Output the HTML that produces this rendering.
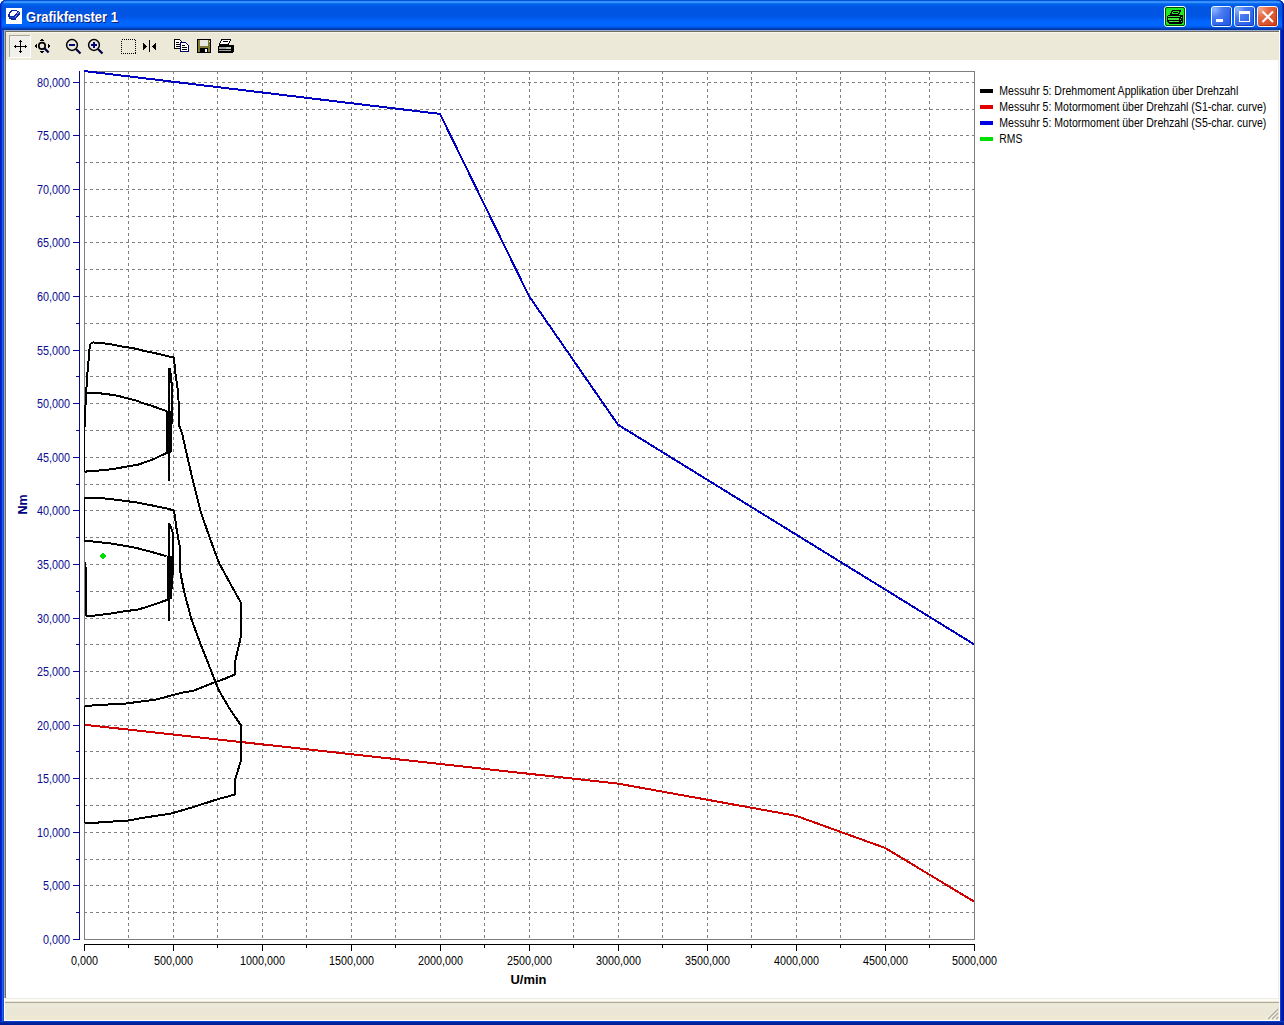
<!DOCTYPE html>
<html><head><meta charset="utf-8">
<style>
*{margin:0;padding:0;box-sizing:border-box}
html,body{width:1284px;height:1025px;overflow:hidden;background:#FFFFFF;font-family:"Liberation Sans",sans-serif;position:relative}
.a{position:absolute}
#title{left:0;top:0;width:1284px;height:30px;border-radius:6px 6px 0 0;box-shadow:inset 1px 0 0 #0020C8,inset 2px 0 0 #0840D8,inset -1px 0 0 #001A98,inset -2px 0 0 #0030C0;
background:linear-gradient(to bottom,#0058D8 0px,#0058D8 1px,#2A85FA 1px,#3A93FF 2px,#3A93FF 3px,#1479F5 3px,#0066EA 4px,#005FEE 5px,#0059E6 6px,#0055E2 7px,#0055E2 16px,#005AEC 18px,#0060F5 20px,#0066FF 21px,#0066FF 26px,#005AEE 27px,#0048C8 28px,#0038A8 29px,#0038A8 30px)}
#frame{left:0;top:30px;width:1284px;height:995px;
background:linear-gradient(to right,#0018D0 0,#0018D0 1px,#0828D8 1px,#0828D8 2px,#2060F0 2px,#2060F0 3px,#1050C0 3px,#1050C0 4px,#0B3FE0 4px,#0B3FE0 1281px,#0020B8 1281px,#0018A0 1283px,#001090 1284px)}
#fbot{left:0;top:1021px;width:1284px;height:4px;background:linear-gradient(to bottom,#0A3CC8 0,#0A3CC8 1px,#0028A8 1px,#001A90 4px)}
#client{left:4px;top:30px;width:1276px;height:991px;background:#ECE9D8}
#ttl{left:26px;top:8px;font:bold 13.6px "Liberation Sans",sans-serif;color:#fff;text-shadow:1px 1px 0 #0A1E80;white-space:nowrap;letter-spacing:-0.15px}
svg text{font-family:"Liberation Sans",sans-serif;font-size:12px}
</style></head><body>
<div class="a" id="title"></div>
<div class="a" id="frame"></div>
<div class="a" id="fbot"></div>
<div class="a" id="client">
  <div class="a" style="left:0;top:0;width:1276px;height:1px;background:#98ACD0"></div>
  <div class="a" style="left:0;top:0;width:1px;height:968px;background:#98ACD0"></div>
  <div class="a" style="left:1px;top:1px;width:1274px;height:1px;background:#716F64"></div>
  <div class="a" style="left:1px;top:1px;width:1px;height:967px;background:#716F64"></div>
  <div class="a" style="left:2px;top:2px;width:1273px;height:1px;background:#F8F6EA"></div>
  <div class="a" style="left:1275px;top:0;width:1px;height:991px;background:#fff"></div>
  <div class="a" style="left:0;top:990px;width:1276px;height:1px;background:#fff"></div>
  <div class="a" style="left:1px;top:1px;width:1px;height:967px;background:#716F64"></div>
  <!-- chart white -->
  <div class="a" style="left:2px;top:30px;width:1273px;height:938px;background:#fff"></div>
  <div class="a" style="left:2px;top:968px;width:1273px;height:1px;background:#F0EEE4"></div>
  <div class="a" style="left:1274px;top:30px;width:1px;height:939px;background:#F0EEE4"></div>
  <div class="a" style="left:1px;top:969px;width:1274px;height:2px;background:#FBFAF4"></div>
  <div class="a" style="left:0;top:968px;width:1px;height:23px;background:#FFFFFF"></div>
  <div class="a" style="left:1px;top:972px;width:1274px;height:1px;background:#ACA899"></div>
  <div class="a" style="left:1px;top:973px;width:1274px;height:17px;background:linear-gradient(to bottom,#ECE9D8,#EAE7D8 60%,#F0E8D2 90%,#ECE9D8)"></div>
</div>
<svg width="1284" height="1025" style="position:absolute;left:0;top:0">
<g shape-rendering="crispEdges">
<path d="M128.5 71V939 M173.5 71V939 M217.5 71V939 M262.5 71V939 M306.5 71V939 M351.5 71V939 M395.5 71V939 M440.5 71V939 M484.5 71V939 M529.5 71V939 M573.5 71V939 M618.5 71V939 M662.5 71V939 M707.5 71V939 M751.5 71V939 M796.5 71V939 M840.5 71V939 M885.5 71V939 M929.5 71V939 M84 912.5H974 M84 885.5H974 M84 859.5H974 M84 832.5H974 M84 805.5H974 M84 778.5H974 M84 751.5H974 M84 725.5H974 M84 698.5H974 M84 671.5H974 M84 644.5H974 M84 618.5H974 M84 591.5H974 M84 564.5H974 M84 537.5H974 M84 510.5H974 M84 484.5H974 M84 457.5H974 M84 430.5H974 M84 403.5H974 M84 376.5H974 M84 350.5H974 M84 323.5H974 M84 296.5H974 M84 269.5H974 M84 242.5H974 M84 216.5H974 M84 189.5H974 M84 162.5H974 M84 135.5H974 M84 109.5H974 M84 82.5H974" stroke="#808080" stroke-width="1" stroke-dasharray="3 3" fill="none"/>
<rect x="84.5" y="71.5" width="890" height="868" fill="none" stroke="#808080" stroke-width="1"/>
<path d="M79.5 71V940 M73 939.5H80 M76 912.5H80 M73 885.5H80 M76 859.5H80 M73 832.5H80 M76 805.5H80 M73 778.5H80 M76 751.5H80 M73 725.5H80 M76 698.5H80 M73 671.5H80 M76 644.5H80 M73 618.5H80 M76 591.5H80 M73 564.5H80 M76 537.5H80 M73 510.5H80 M76 484.5H80 M73 457.5H80 M76 430.5H80 M73 403.5H80 M76 376.5H80 M73 350.5H80 M76 323.5H80 M73 296.5H80 M76 269.5H80 M73 242.5H80 M76 216.5H80 M73 189.5H80 M76 162.5H80 M73 135.5H80 M76 109.5H80 M73 82.5H80" stroke="#0A0A90" stroke-width="1" fill="none"/>
<path d="M84 944.5H975 M84.5 944V951 M128.5 944V948 M173.5 944V951 M217.5 944V948 M262.5 944V951 M306.5 944V948 M351.5 944V951 M395.5 944V948 M440.5 944V951 M484.5 944V948 M529.5 944V951 M573.5 944V948 M618.5 944V951 M662.5 944V948 M707.5 944V951 M751.5 944V948 M796.5 944V951 M840.5 944V948 M885.5 944V951 M929.5 944V948 M974.5 944V951" stroke="#000" stroke-width="1" fill="none"/>
<path d="M84.0 71.0 L440.0 113.9 L529.0 296.1 L618.0 424.7 L974.0 644.3" stroke="#0000C0" stroke-width="2" fill="none" stroke-linejoin="round"/>
<path d="M84.0 724.7 L618.0 783.6 L796.0 815.8 L885.0 847.9 L974.0 901.5" stroke="#D00000" stroke-width="2" fill="none" stroke-linejoin="round"/>
<path d="M85.2 427.0 L85.5 405.0 L86.2 392.2 L86.8 381.7 L87.7 369.7 L88.8 357.7 L89.7 346.5 L90.6 343.6 L93.2 342.4 L109.6 343.9 L116.6 345.4 L123.7 346.8 L130.7 347.7 L136.0 348.8 L143.6 350.8 L152.4 352.6 L161.2 354.6 L168.8 356.4 L174.1 357.6 L174.9 369.3 L176.1 378.0 L177.0 384.5 L178.2 392.7 L178.5 400.0 L178.9 424.6 L182.2 434.0 L187.4 457.1 L193.9 484.9 L200.4 510.8 L209.7 537.7 L218.9 562.7 L230.0 583.1 L240.5 602.0 L240.5 638.3 L235.4 660.2 L234.9 674.5 L225.1 678.6 L215.5 682.0 L193.4 690.7 L181.8 692.7 L155.9 699.6 L124.4 703.7 L98.5 705.0 L84.8 706.1" stroke="#000" stroke-width="2" fill="none" stroke-linejoin="round"/>
<path d="M85.5 392.6 L98.2 393.1 L108.8 394.4 L117.5 395.7 L127.2 398.3 L138.0 401.0 L140.0 402.2 L151.4 405.7 L166.4 411.0" stroke="#000" stroke-width="2" fill="none" stroke-linejoin="round"/>
<path d="M84.6 472.2 L88.5 470.8 L102.6 470.4 L114.9 468.7 L127.2 466.5 L138.0 464.7 L153.2 459.3 L166.4 453.1 L170.8 451.4" stroke="#000" stroke-width="2" fill="none" stroke-linejoin="round"/>
<path d="M168.6 368.0 L168.6 481.0" stroke="#000" stroke-width="2" fill="none" stroke-linejoin="round"/>
<path d="M169.5 368.0 L171.1 376.3 L171.6 383.9 L171.6 400.0 L171.6 422.0 L170.5 452.0" stroke="#000" stroke-width="2" fill="none" stroke-linejoin="round"/>
<path d="M84.3 498.2 L102.1 498.2 L113.5 499.5 L128.8 501.4 L138.0 502.7 L152.5 505.5 L167.7 508.7 L174.1 510.6 L176.6 529.0 L179.8 546.8 L179.8 569.6 L184.2 592.1 L186.3 600.0 L191.7 620.1 L193.9 626.0 L200.5 643.8 L215.5 682.0 L218.7 690.0 L229.2 708.0 L240.6 724.8 L241.0 760.4 L235.1 779.5 L235.1 794.5 L217.3 799.3 L194.1 806.8 L170.9 813.6 L143.6 817.7 L128.5 820.5 L98.5 822.5 L84.8 822.5" stroke="#000" stroke-width="2" fill="none" stroke-linejoin="round"/>
<path d="M84.3 540.8 L92.0 541.4 L109.7 543.3 L128.8 546.5 L138.0 548.4 L151.2 551.8 L166.5 556.3" stroke="#000" stroke-width="2" fill="none" stroke-linejoin="round"/>
<path d="M85.5 562.0 L85.6 591.5 L86.2 615.6" stroke="#000" stroke-width="2" fill="none" stroke-linejoin="round"/>
<path d="M86.2 615.6 L94.5 615.6 L109.7 613.7 L128.8 610.6 L136.0 610.2 L152.5 605.1 L166.5 600.1 L170.9 597.5" stroke="#000" stroke-width="2" fill="none" stroke-linejoin="round"/>
<path d="M169.3 522.6 L169.3 621.0" stroke="#000" stroke-width="2" fill="none" stroke-linejoin="round"/>
<path d="M169.6 523.9 L172.8 532.8 L172.8 570.9 L170.9 597.5" stroke="#000" stroke-width="2" fill="none" stroke-linejoin="round"/>
<path d="M166 411H171.5V452H166Z M166.5 556H172V599H166.5Z" fill="#000"/>
<path d="M84 427H85V472H84Z M84 498H85V541H84Z M84 706H85V823H84Z" fill="#000"/>
<path d="M102.5 552.5L106 556L102.5 559.5L99 556Z" fill="#00E000"/>
</g>
<g fill="#0A0A90">
<text x="70" y="944" text-anchor="end" textLength="27" lengthAdjust="spacingAndGlyphs">0,000</text>
<text x="70" y="890" text-anchor="end" textLength="27" lengthAdjust="spacingAndGlyphs">5,000</text>
<text x="70" y="837" text-anchor="end" textLength="33" lengthAdjust="spacingAndGlyphs">10,000</text>
<text x="70" y="783" text-anchor="end" textLength="33" lengthAdjust="spacingAndGlyphs">15,000</text>
<text x="70" y="730" text-anchor="end" textLength="33" lengthAdjust="spacingAndGlyphs">20,000</text>
<text x="70" y="676" text-anchor="end" textLength="33" lengthAdjust="spacingAndGlyphs">25,000</text>
<text x="70" y="623" text-anchor="end" textLength="33" lengthAdjust="spacingAndGlyphs">30,000</text>
<text x="70" y="569" text-anchor="end" textLength="33" lengthAdjust="spacingAndGlyphs">35,000</text>
<text x="70" y="515" text-anchor="end" textLength="33" lengthAdjust="spacingAndGlyphs">40,000</text>
<text x="70" y="462" text-anchor="end" textLength="33" lengthAdjust="spacingAndGlyphs">45,000</text>
<text x="70" y="408" text-anchor="end" textLength="33" lengthAdjust="spacingAndGlyphs">50,000</text>
<text x="70" y="355" text-anchor="end" textLength="33" lengthAdjust="spacingAndGlyphs">55,000</text>
<text x="70" y="301" text-anchor="end" textLength="33" lengthAdjust="spacingAndGlyphs">60,000</text>
<text x="70" y="247" text-anchor="end" textLength="33" lengthAdjust="spacingAndGlyphs">65,000</text>
<text x="70" y="194" text-anchor="end" textLength="33" lengthAdjust="spacingAndGlyphs">70,000</text>
<text x="70" y="140" text-anchor="end" textLength="33" lengthAdjust="spacingAndGlyphs">75,000</text>
<text x="70" y="87" text-anchor="end" textLength="33" lengthAdjust="spacingAndGlyphs">80,000</text>
</g>
<g fill="#000">
<text x="84.5" y="965" text-anchor="middle" textLength="27" lengthAdjust="spacingAndGlyphs">0,000</text>
<text x="173.5" y="965" text-anchor="middle" textLength="39" lengthAdjust="spacingAndGlyphs">500,000</text>
<text x="262.5" y="965" text-anchor="middle" textLength="45" lengthAdjust="spacingAndGlyphs">1000,000</text>
<text x="351.5" y="965" text-anchor="middle" textLength="45" lengthAdjust="spacingAndGlyphs">1500,000</text>
<text x="440.5" y="965" text-anchor="middle" textLength="45" lengthAdjust="spacingAndGlyphs">2000,000</text>
<text x="529.5" y="965" text-anchor="middle" textLength="45" lengthAdjust="spacingAndGlyphs">2500,000</text>
<text x="618.5" y="965" text-anchor="middle" textLength="45" lengthAdjust="spacingAndGlyphs">3000,000</text>
<text x="707.5" y="965" text-anchor="middle" textLength="45" lengthAdjust="spacingAndGlyphs">3500,000</text>
<text x="796.5" y="965" text-anchor="middle" textLength="45" lengthAdjust="spacingAndGlyphs">4000,000</text>
<text x="885.5" y="965" text-anchor="middle" textLength="45" lengthAdjust="spacingAndGlyphs">4500,000</text>
<text x="974.5" y="965" text-anchor="middle" textLength="45" lengthAdjust="spacingAndGlyphs">5000,000</text>
<text x="510.5" y="984" font-weight="bold" style="font-size:13px" textLength="36" lengthAdjust="spacingAndGlyphs">U/min</text>
</g>
<text transform="translate(27 504.5) rotate(-90)" text-anchor="middle" fill="#000080" font-weight="bold" style="font-size:12.5px">Nm</text>
<g fill="#000">
<rect x="980" y="89" width="13" height="4" fill="#000"/><text x="999.3" y="95" textLength="239" lengthAdjust="spacingAndGlyphs">Messuhr 5: Drehmoment Applikation über Drehzahl</text>
<rect x="980" y="105" width="13" height="4" fill="#E00000"/><text x="999.3" y="111" textLength="267" lengthAdjust="spacingAndGlyphs">Messuhr 5: Motormoment über Drehzahl (S1-char. curve)</text>
<rect x="980" y="121" width="13" height="4" fill="#0000E0"/><text x="999.3" y="127" textLength="267" lengthAdjust="spacingAndGlyphs">Messuhr 5: Motormoment über Drehzahl (S5-char. curve)</text>
<rect x="980" y="137" width="13" height="4" fill="#00E000"/><text x="999.3" y="143" textLength="23" lengthAdjust="spacingAndGlyphs">RMS</text>
</g>

<g shape-rendering="crispEdges">
 <rect x="9" y="35" width="22" height="23" fill="#F1F0EC"/>
 <rect x="9" y="35" width="21" height="1" fill="#ACA899"/>
 <rect x="9" y="35" width="1" height="22" fill="#ACA899"/>
 <rect x="30" y="35" width="1" height="23" fill="#FFFFFF"/>
 <rect x="9" y="57" width="22" height="1" fill="#FFFFFF"/>
 <!-- move -->
 <rect x="20" y="40" width="1" height="13" fill="#000"/>
 <rect x="14" y="46" width="13" height="1" fill="#000"/>
 <rect x="19" y="41" width="3" height="1" fill="#000"/>
 <rect x="19" y="51" width="3" height="1" fill="#000"/>
 <rect x="15" y="45" width="1" height="3" fill="#000"/>
 <rect x="25" y="45" width="1" height="3" fill="#000"/>
</g>
<!-- zoom fit -->
<g shape-rendering="crispEdges" fill="#000">
 <rect x="41" y="39" width="2" height="1"/><rect x="40" y="40" width="4" height="1"/>
 <rect x="40" y="51" width="4" height="1"/><rect x="41" y="52" width="2" height="1"/>
 <rect x="35" y="45" width="1" height="2"/><rect x="36" y="44" width="1" height="4"/>
 <rect x="48" y="44" width="1" height="4"/><rect x="49" y="45" width="1" height="2"/>
</g>
<circle cx="42" cy="45.9" r="3.2" fill="none" stroke="#000" stroke-width="1.7"/><path d="M44.6 48.5L48.6 52.5" stroke="#000040" stroke-width="2.3"/>
<!-- zoom out -->
<circle cx="72" cy="45" r="5.4" fill="none" stroke="#000" stroke-width="1.5"/>
<rect x="69" y="44" width="6" height="2" fill="#000080"/>
<path d="M76 49L80.5 53.5" stroke="#000040" stroke-width="2.2"/>
<!-- zoom in -->
<circle cx="94" cy="45" r="5.4" fill="none" stroke="#000" stroke-width="1.5"/>
<rect x="91" y="44" width="6" height="2" fill="#000080"/>
<rect x="93" y="42" width="2" height="6" fill="#000080"/>
<path d="M98 49L102.5 53.5" stroke="#000040" stroke-width="2.2"/>
<!-- dotted rect -->
<rect x="121.5" y="39.5" width="14" height="14" fill="none" stroke="#000" stroke-width="1" stroke-dasharray="1 1" shape-rendering="crispEdges"/>
<!-- mirror -->
<g shape-rendering="crispEdges">
<rect x="149" y="40" width="1" height="12" fill="#000"/>
<path d="M143 43L147 46.5L143 50Z" fill="#000"/>
<path d="M156 43L152 46.5L156 50Z" fill="#000"/>
<!-- copy -->
<path d="M174.5 39.5H179.5L181.5 41.5V48.5H174.5Z" fill="#fff" stroke="#000"/>
<rect x="176" y="42" width="3" height="1" fill="#000"/><rect x="176" y="44" width="4" height="1" fill="#000"/><rect x="176" y="46" width="4" height="1" fill="#000"/>
<path d="M180.5 42.5H185.5L188.5 45.5V51.5H180.5Z" fill="#fff" stroke="#000060"/>
<rect x="182" y="45" width="3" height="1" fill="#000"/><rect x="182" y="47" width="5" height="1" fill="#000"/><rect x="182" y="49" width="5" height="1" fill="#000"/>
<!-- floppy -->
<rect x="197" y="39" width="14" height="14" fill="#000"/>
<rect x="198" y="40" width="12" height="12" fill="#7E7A30"/>
<rect x="200" y="40" width="8" height="6" fill="#E8E8E0"/>
<rect x="200" y="48" width="8" height="5" fill="#000"/>
<rect x="205" y="49" width="2" height="3" fill="#fff"/>
<rect x="209" y="41" width="1" height="1" fill="#fff"/>
<!-- printer -->
<path d="M221.5 39.5H230.5L228.5 44.5H219.5Z" fill="#fff" stroke="#000"/>
<rect x="223" y="41" width="5" height="1" fill="#000"/>
<rect x="218" y="45" width="16" height="8" rx="2" fill="#000"/>
<rect x="219" y="47" width="12" height="2" fill="#A0A0A0"/>
<rect x="226" y="47" width="5" height="2" fill="#B0D0B0"/>
<rect x="219" y="50" width="12" height="1" fill="#A0A0A0"/>
</g>


<!-- app icon -->
<g shape-rendering="crispEdges">
<rect x="6" y="8" width="16" height="16" fill="#fff"/>
<g fill="#1028A8"><rect x="11" y="10" width="6" height="1"/><rect x="10" y="11" width="2" height="1"/><rect x="17" y="11" width="2" height="1"/><rect x="9" y="12" width="2" height="1"/><rect x="17" y="12" width="3" height="1"/><rect x="9" y="13" width="1" height="1"/><rect x="16" y="13" width="4" height="1"/><rect x="8" y="14" width="2" height="1"/><rect x="15" y="14" width="5" height="1"/><rect x="8" y="15" width="2" height="1"/><rect x="14" y="15" width="5" height="1"/><rect x="8" y="16" width="10" height="1"/><rect x="9" y="17" width="8" height="1"/><rect x="9" y="18" width="7" height="1"/><rect x="11" y="19" width="5" height="1"/></g>
<rect x="10" y="17" width="6" height="1" fill="#2040D0"/>
<rect x="18" y="12" width="1" height="1" fill="#A0C0FF"/><rect x="17" y="13" width="1" height="1" fill="#A0C0FF"/><rect x="16" y="15" width="1" height="1" fill="#80A0F0"/><rect x="15" y="16" width="1" height="1" fill="#80A0F0"/>
</g>
<!-- green printer button -->
<rect x="1164.5" y="6.5" width="21" height="20" rx="2.5" fill="#10D010" stroke="#F0FFF8"/>
<rect x="1165.5" y="7.5" width="19" height="18" rx="1.5" fill="#22E822" stroke="#005000"/>
<g shape-rendering="crispEdges">
<path d="M1172.5 10.5H1180.5L1178.5 14.5H1170.5Z" fill="none" stroke="#000"/>
<rect x="1173" y="12" width="5" height="1" fill="#000"/>
<path d="M1168 15H1183V22L1182 24H1169L1167 22V17Z" fill="#000"/>
<rect x="1168" y="16" width="12" height="1" fill="#40E840"/>
<rect x="1168" y="18" width="11" height="2" fill="#40E840"/>
<rect x="1169" y="21" width="10" height="1" fill="#40E840"/>
<rect x="1181" y="17" width="1" height="1" fill="#40E840"/>
<rect x="1180" y="19" width="1" height="1" fill="#40E840"/>
<rect x="1181" y="21" width="1" height="1" fill="#40E840"/>
</g>
<!-- min -->
<defs>
<radialGradient id="gb" cx="0.15" cy="0.15" r="1.1"><stop offset="0" stop-color="#8CB4FF"/><stop offset="0.35" stop-color="#4A7CF0"/><stop offset="0.75" stop-color="#2E64EA"/><stop offset="1" stop-color="#1A58F0"/></radialGradient>
<radialGradient id="gr" cx="0.15" cy="0.15" r="1.1"><stop offset="0" stop-color="#F4A488"/><stop offset="0.35" stop-color="#E46A48"/><stop offset="0.75" stop-color="#D8502C"/><stop offset="1" stop-color="#CC3A10"/></radialGradient>
</defs>
<rect x="1211.5" y="6.5" width="20" height="20" rx="2.5" fill="url(#gb)" stroke="#EAFAFF"/>
<path d="M1230.5 8.5V24.5Q1230.5 25.5 1229.5 25.5H1213.5" stroke="#1038B0" fill="none" stroke-width="1" opacity="0.8"/>
<rect x="1216" y="19" width="7" height="3" fill="#fff"/>
<rect x="1234.5" y="6.5" width="20" height="20" rx="2.5" fill="url(#gb)" stroke="#EAFAFF"/>
<path d="M1253.5 8.5V24.5Q1253.5 25.5 1252.5 25.5H1236.5" stroke="#1038B0" fill="none" stroke-width="1" opacity="0.8"/>
<g shape-rendering="crispEdges"><rect x="1239" y="11" width="11" height="3" fill="#fff"/><rect x="1239" y="11" width="1" height="11" fill="#fff"/><rect x="1249" y="11" width="1" height="11" fill="#fff"/><rect x="1239" y="21" width="11" height="1" fill="#fff"/></g>
<rect x="1257.5" y="6.5" width="20" height="20" rx="2.5" fill="url(#gr)" stroke="#FFF4F0"/>
<path d="M1276.5 8.5V24.5Q1276.5 25.5 1275.5 25.5H1259.5" stroke="#B02800" fill="none" stroke-width="1" opacity="0.7"/>
<path d="M1262.5 11.5L1273 22M1273 11.5L1262.5 22" stroke="#fff" stroke-width="2"/>

<text x="27" y="23" fill="#0A1E80" font-weight="bold" style="font-size:14.5px" textLength="92" lengthAdjust="spacingAndGlyphs">Grafikfenster 1</text>
<text x="26" y="22" fill="#fff" font-weight="bold" style="font-size:14.5px" textLength="92" lengthAdjust="spacingAndGlyphs">Grafikfenster 1</text>
<!-- resize grip -->
<path d="M1267 1019L1277 1009M1271 1019L1277 1013M1275 1019L1277 1017" stroke="#FFFFFF" stroke-width="1.2"/><path d="M1268 1019L1278 1009M1272 1019L1278 1013M1276 1019L1278 1017" stroke="#ACA899" stroke-width="1.3"/>
</svg>
</body></html>
